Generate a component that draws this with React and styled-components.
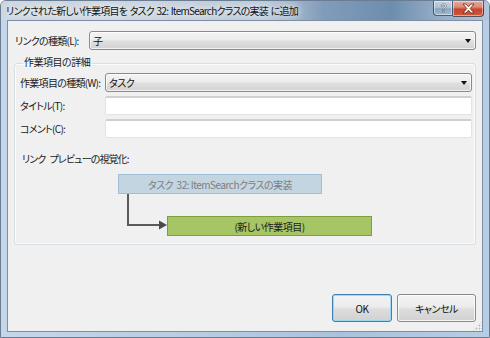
import React from "react";
import styled, { createGlobalStyle, css } from "styled-components";

const Global = createGlobalStyle`
  html, body { margin: 0; padding: 0; background: #ffffff; }
  body { font-family: "Noto Sans CJK JP", "Noto Sans", sans-serif; }
  * { box-sizing: border-box; }
`;

const uiText = css`
  font-family: "Noto Sans CJK JP", "Noto Sans", sans-serif;
  font-size: 10px;
  letter-spacing: -0.5px;
  font-feature-settings: "palt";
  color: #1a1a1a;
  white-space: nowrap;
`;

const Window = styled.div`
  width: 490px;
  height: 338px;
  display: flex;
  flex-direction: column;
  padding: 0 6px 5px 6px;
  border-radius: 6px 6px 0 0;
  border: 1px solid #6b7d92;
  background: linear-gradient(to right, #c4d6e9 0%, #b8cde3 40%, #a9c2dd 70%, #b7cde4 100%);
  overflow: hidden;
`;

const TitleBar = styled.div`
  height: 19px;
  margin: 0 -6px;
  padding: 0 5px 0 5px;
  display: flex;
  align-items: flex-start;
  background: linear-gradient(
    to right,
    #cfd8e1 0%,
    #c9d3de 35%,
    #b9c8d8 55%,
    #819cb9 66%,
    #6d8dae 80%,
    #8fa8c3 88%,
    #b3c6da 100%
  );
`;

const Title = styled.div`
  ${uiText};
  flex: 1;
  min-width: 0;
  overflow: hidden;
  letter-spacing: -0.75px;
  word-spacing: 1px;
  line-height: 19px;
  color: #111;
  text-shadow: 0 0 6px rgba(255,255,255,0.95), 0 0 10px rgba(255,255,255,0.8);
`;

const CaptionButtons = styled.div`
  display: flex;
  flex: none;
`;

const CaptionButton = styled.div`
  width: ${(p) => p.$w}px;
  height: ${(p) => p.$h}px;
  display: flex;
  align-items: center;
  justify-content: center;
  border: 1px solid rgba(40, 55, 75, 0.75);
  border-top: none;
  box-shadow: inset 0 0 0 1px rgba(255,255,255,0.45);
  background: ${(p) =>
    p.$close
      ? "linear-gradient(#e9a897 0%, #dc8a76 40%, #c8442c 55%, #d0593c 100%)"
      : "linear-gradient(rgba(255,255,255,0.45) 0%, rgba(230,238,246,0.35) 45%, rgba(120,150,180,0.35) 55%, rgba(170,195,220,0.45) 100%)"};
  border-radius: ${(p) => (p.$close ? "0 0 4px 0" : "0 0 0 4px")};
  border-left: ${(p) => (p.$close ? "none" : "1px solid rgba(40,55,75,0.75)")};
`;

const ClientWrap = styled.div`
  position: relative;
  flex: 1;
  display: flex;
`;

const Client = styled.div`
  flex: 1;
  display: flex;
  flex-direction: column;
  border: 1px solid #7c8ea3;
  background: #f0f0f0;
  padding: 10px 6px 9px 6px;
`;

const FieldRow = styled.div`
  display: grid;
  grid-template-columns: ${(p) => p.$label}px 1fr;
  align-items: center;
  height: 19px;
`;

const Label = styled.label`
  ${uiText};
  letter-spacing: -0.7px;
  padding-left: ${(p) => p.$indent || 0}px;
  line-height: 19px;
`;

const Combo = styled.div`
  ${uiText};
  position: relative;
  height: 19px;
  border: 1px solid #8a8a8a;
  border-radius: 3px;
  background: linear-gradient(#f4f4f4 0%, #ececec 45%, #dedede 55%, #d3d3d3 100%);
  box-shadow: inset 0 0 0 1px rgba(255,255,255,0.7);
  line-height: 17px;
  padding-left: 3px;
  color: #111;
`;

const Arrow = styled.span`
  position: absolute;
  right: 4px;
  top: 7px;
  width: 0;
  height: 0;
  border-left: 3.5px solid transparent;
  border-right: 3.5px solid transparent;
  border-top: 4px solid #111;
`;

const TextBox = styled.input`
  ${uiText};
  height: 19px;
  width: 100%;
  border: 1px solid #e2e3e6;
  border-top: 2px solid #cfd0d2;
  background: #fff;
  border-radius: 2px;
  padding: 0 3px;
  outline: none;
`;

const Group = styled.fieldset`
  margin: 4px 0 0 0;
  padding: 0 3px 8px 5px;
  border: 1px solid #d5dfe5;
  border-radius: 3px;
  box-shadow: inset 0 0 0 1px #fbfbfb;
  min-width: 0;
`;

const Legend = styled.legend`
  ${uiText};
  margin-left: 3px;
  padding: 0 2px 3px 1px;
  line-height: 15px;
`;

const Rows = styled.div`
  display: flex;
  flex-direction: column;
  gap: 4px;
  margin-top: 1px;
`;

const PreviewLabel = styled.div`
  ${uiText};
  letter-spacing: -0.9px;
  word-spacing: 3px;
  margin: 13px 0 0 2px;
  line-height: 15px;
`;

const Diagram = styled.div`
  display: flex;
  flex-direction: column;
  margin: 8px 0 0 98px;
`;

const Node = styled.div`
  ${uiText};
  width: ${(p) => p.$w}px;
  height: 20px;
  display: flex;
  align-items: center;
  justify-content: center;
  border: 1px solid ${(p) => (p.$child ? "#7e9c42" : "#9fbdd8")};
  background: ${(p) => (p.$child ? "#a6c565" : "#c4d5e2")};
  color: ${(p) => (p.$child ? "#1a1a1a" : "#7d7d7d")};
`;

const ChildRow = styled.div`
  display: flex;
  align-items: flex-end;
`;

const Spacer = styled.div`
  flex: 1;
`;

const ButtonRow = styled.div`
  display: flex;
  justify-content: flex-end;
  gap: 5px;
`;

const Button = styled.button`
  ${uiText};
  width: ${(p) => p.$w}px;
  height: 28px;
  border-radius: 3px;
  color: #111;
  border: 1px solid ${(p) => (p.$default ? "#3c7fb1" : "#8a8a8a")};
  background: linear-gradient(#f3f3f3 0%, #ececec 45%, #dddddd 55%, #d1d1d1 100%);
  box-shadow: inset 0 0 0 1px
    ${(p) => (p.$default ? "rgba(150,215,245,0.9)" : "rgba(255,255,255,0.75)")};
  padding: 0;
`;

const Grip = styled.div`
  position: absolute;
  right: 1px;
  bottom: 1px;
  width: 10px;
  height: 10px;
  background-image: radial-gradient(circle, #b4b4b4 0.8px, transparent 1.1px);
  background-size: 3px 3px;
  clip-path: polygon(100% 0, 100% 100%, 0 100%);
`;

function Connector() {
  return (
    <svg width="49" height="42" viewBox="0 0 49 42">
      <path d="M10 0 V31 H42" fill="none" stroke="#5a5a5a" strokeWidth="2" />
      <path d="M41 26.5 L49 31 L41 35.5 Z" fill="#4a4a4a" />
    </svg>
  );
}

export default function App() {
  return (
    <>
      <Global />
      <Window>
        <TitleBar>
          <Title>リンクされた新しい作業項目を タスク 32: ItemSearchクラスの実装 に追加</Title>
          <CaptionButtons>
            <CaptionButton $w={20} $h={15}>
              <svg width="9" height="11" viewBox="0 0 9 11">
                <path d="M2 3.2 C2 1.6 3.2 0.8 4.6 0.8 C6.1 0.8 7.2 1.7 7.2 3 C7.2 4.3 6.2 4.8 5.6 5.2 C5.2 5.5 5.1 5.8 5.1 6.6 H3.7 C3.7 5.4 4 4.9 4.8 4.4 C5.4 4 5.7 3.7 5.7 3.1 C5.7 2.5 5.2 2.1 4.6 2.1 C3.9 2.1 3.5 2.6 3.5 3.2 Z M3.6 7.6 H5.2 V9.2 H3.6 Z" fill="#f4f7fa" stroke="#3a4a5c" strokeWidth="0.5" />
              </svg>
            </CaptionButton>
            <CaptionButton $close $w={31} $h={16}>
              <svg width="13" height="11" viewBox="0 0 13 11">
                <path d="M1 1 H4 L6.5 3.8 L9 1 H12 L8.2 5.5 L12 10 H9 L6.5 7.2 L4 10 H1 L4.8 5.5 Z" fill="#ffffff" stroke="#5a2218" strokeWidth="0.8" strokeLinejoin="round" />
              </svg>
            </CaptionButton>
          </CaptionButtons>
        </TitleBar>
        <ClientWrap>
          <Client>
            <FieldRow $label={75}>
              <Label $indent={1}>リンクの種類(L):</Label>
              <Combo>
                子<Arrow />
              </Combo>
            </FieldRow>
            <Group>
              <Legend>作業項目の詳細</Legend>
              <Rows>
                <FieldRow $label={85}>
                  <Label>作業項目の種類(W):</Label>
                  <Combo>
                    タスク<Arrow />
                  </Combo>
                </FieldRow>
                <FieldRow $label={85}>
                  <Label>タイトル(T):</Label>
                  <TextBox />
                </FieldRow>
                <FieldRow $label={85}>
                  <Label>コメント(C):</Label>
                  <TextBox />
                </FieldRow>
              </Rows>
              <PreviewLabel>リンク プレビューの視覚化:</PreviewLabel>
              <Diagram>
                <Node $w={204}>タスク&nbsp; 32: ItemSearchクラスの実装</Node>
                <ChildRow>
                  <Connector />
                  <Node $child $w={205}>(新しい作業項目)</Node>
                </ChildRow>
              </Diagram>
            </Group>
            <Spacer />
            <ButtonRow>
              <Button $default $w={60}>OK</Button>
              <Button $w={79}>キャンセル</Button>
            </ButtonRow>
          </Client>
          <Grip />
        </ClientWrap>
      </Window>
    </>
  );
}
